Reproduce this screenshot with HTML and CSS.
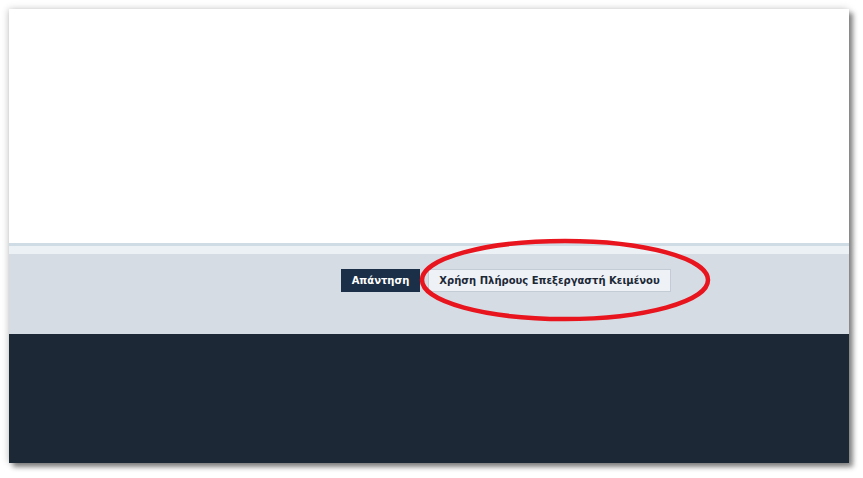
FILE: index.html
```html
<!doctype html>
<html lang="el">
<head>
    <meta charset="UTF-8">
    <title>Απάντηση</title>
    <link rel="stylesheet" href="styles.css">
</head>
<body>
<div class="window">
    <div class="editor"></div>
    <div class="editor-bottom"></div>
    <div class="actions">
        <div class="buttons">
            <button class="btn btn-primary">Απάντηση</button>
            <button class="btn btn-light">Χρήση Πλήρους Επεξεργαστή Κειμένου</button>
        </div>
    </div>
    <div class="footer"></div>
    <!-- annotation circle -->
    <svg class="mark" width="294" height="86" viewBox="0 0 294 86">
        <ellipse cx="147" cy="43" rx="143" ry="39" fill="none" stroke="#e8141e" stroke-width="4.5"/>
    </svg>
</div>
</body>
</html>
```

FILE: styles.css
```css
html, body { margin: 0; padding: 0; background: #fff; }
body { width: 863px; height: 478px; overflow: hidden; }
.window { position: relative; margin: 9px 0 0 9px; width: 840px; height: 454px; display: flex; flex-direction: column; box-shadow: 4px 4px 5px rgba(0,0,0,.45), -1px 0 6px rgba(0,0,0,.15), 0 0 10px rgba(0,0,0,.08); }
.editor { height: 234px; background: #fff; border-bottom: 3px solid #d0dce5; }
.editor-bottom { height: 8px; background: #ecf1f5; }
.actions { height: 80px; background: #d5dce3; padding-top: 15px; box-sizing: border-box; }
.buttons { display: flex; gap: 8px; padding-left: 332px; }
.btn { font-family: "DejaVu Sans", Verdana, sans-serif; font-weight: bold; font-size: 10px; height: 23px; padding: 0; border: 1px solid transparent; white-space: nowrap; cursor: pointer; }
.btn-primary { background: #1c2f48; color: #fff; border-color: #1c2f48; width: 79px; }
.btn-light { background: #eef2f6; color: #1c2836; border-color: #c3ccd5; width: 243px; }
.footer { flex: 1; background: #1c2836; }
.mark { position: absolute; left: 409px; top: 228px; }
```
